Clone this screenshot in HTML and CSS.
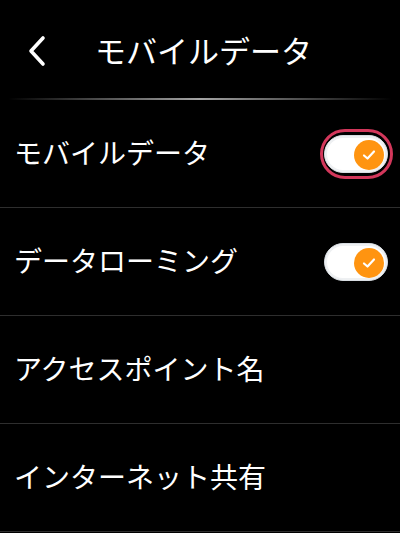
FILE: index.html
```html
<!DOCTYPE html>
<html lang="ja">
  <head>
    <meta charset="UTF-8">
    <meta name="viewport" content="width=device-width, initial-scale=1.0">
    <title>モバイルデータ</title>

    <link rel="stylesheet" href="styles.css">
  </head>

  <body>
    <header class="header">
      <button class="back" aria-label="戻る">
        <svg width="22" height="32" viewBox="0 0 22 32">
          <path d="M17 3 L5 16 L17 29" fill="none" stroke="#fff" stroke-width="3.6" stroke-linecap="round" stroke-linejoin="round"/>
        </svg>
      </button>
      <h1 class="title">モバイルデータ</h1>
    </header>
    <div class="divider"></div>

    <ul class="list">
      <li class="item">
        <span class="label">モバイルデータ</span>
        <span class="switch focused">
          <span class="knob">
            <svg width="14" height="12" viewBox="0 0 14 12"><path d="M2 6.5 L5.5 9.5 L12 2.5" fill="none" stroke="#fff" stroke-width="2.2" stroke-linecap="round" stroke-linejoin="round"/></svg>
          </span>
        </span>
      </li>
      <li class="item">
        <span class="label">データローミング</span>
        <span class="switch">
          <span class="knob">
            <svg width="14" height="12" viewBox="0 0 14 12"><path d="M2 6.5 L5.5 9.5 L12 2.5" fill="none" stroke="#fff" stroke-width="2.2" stroke-linecap="round" stroke-linejoin="round"/></svg>
          </span>
        </span>
      </li>
      <li class="item">
        <span class="label">アクセスポイント名</span>
      </li>
      <li class="item">
        <span class="label">インターネット共有</span>
      </li>
    </ul>
  </body>
</html>
```

FILE: styles.css
```css
body {
  margin: 0;
  background-color: #000;
  color: #fff;
  font-family: "Noto Sans CJK JP", "Noto Sans", sans-serif;
  overflow: hidden;
}

.header {
  height: 98px;
  display: flex;
  align-items: center;
  padding-left: 26px;
}

.back {
  background: none;
  border: none;
  padding: 0;
  width: 22px;
  height: 32px;
  margin-top: 4px;
}

.title {
  margin: 0 0 0 47px;
  font-size: 31px;
  font-weight: normal;
  line-height: 1;
}

.divider {
  height: 2px;
  margin: 0 8px;
  background: linear-gradient(to right, rgba(255,255,255,0), rgba(220,220,220,0.75) 50%, rgba(255,255,255,0));
}

.list {
  list-style: none;
  margin: 0;
  padding: 0;
}

.item {
  height: 107px;
  border-bottom: 1px solid #2e2e2e;
  display: flex;
  align-items: center;
  justify-content: space-between;
  padding: 0 12px 0 14px;
}

.label {
  font-size: 28px;
  line-height: 1;
  padding-bottom: 3px;
}

.switch {
  position: relative;
  width: 64px;
  height: 38px;
  box-sizing: border-box;
  border-radius: 19px;
  background-color: #fff;
  border: 1px solid #d8dde2;
  box-shadow: inset 0 0 0 2px #eef0f2;
  display: flex;
  align-items: center;
  justify-content: flex-end;
  padding-right: 3px;
}

.switch.focused::after {
  content: "";
  position: absolute;
  top: -7px;
  bottom: -7px;
  left: -5px;
  right: -6px;
  border: 3px solid #d3375b;
  border-radius: 26px;
}

.knob {
  width: 30px;
  height: 30px;
  margin-top: 2px;
  border-radius: 50%;
  background-color: #ff9410;
  display: flex;
  align-items: center;
  justify-content: center;
}
```
